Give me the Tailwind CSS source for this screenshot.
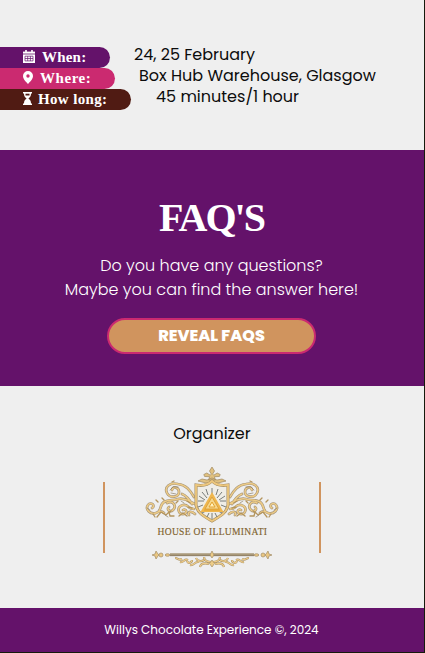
<!DOCTYPE html>
<html lang="en">
<head>
<meta charset="utf-8">
<title>Willys Chocolate Experience</title>
<script src="https://cdn.jsdelivr.net/npm/@tailwindcss/browser@4"></script>
</head>
<body class="flex h-[653px] w-[425px] flex-col overflow-hidden border-r border-b border-[#151a0c] bg-[#efefef] font-[Poppins,Inter,sans-serif] text-[#0c0c0c]">
<section class="h-[150px] shrink-0 pt-[47px] text-base leading-[21px] whitespace-nowrap">
  <div class="flex h-[21px]">
    <div class="flex w-[110px] items-center rounded-r-full bg-[#64126a] pl-[23px] text-white">
      <svg class="mb-[3px] h-[13px] w-[12px]" viewBox="0 0 12 13" fill="none"><path d="M0 1.600h12V13H0z" fill="#fff"/><path d="M2.200 0h1.600v3H2.200zM8.200 0h1.600v3H8.200z" fill="#fff"/><path d="M0 4h12" stroke="#64126a" stroke-width=".8"/><path d="M2 6.200h8v4.700H2zM2 8.500h8M4.700 6.200v4.700M7.400 6.200v4.700" stroke="#64126a" stroke-width=".7"/></svg>
      <span class="ml-[7px] font-['Liberation_Serif',serif] text-[15px] font-bold tracking-[0.2px]">When:</span>
    </div>
    <span class="ml-[24px] -mt-[3px]">24, 25 February</span>
  </div>
  <div class="flex h-[21px]">
    <div class="flex w-[115px] items-center rounded-r-full bg-[#cb2a70] pl-[23px] text-white">
      <svg class="mb-[2px] h-[13px] w-[10px]" viewBox="0 0 10 13"><path fill="#fff" fill-rule="evenodd" d="M5 0a5 5 0 0 1 5 5c0 3.200-3.200 6-5 8-1.800-2-5-4.800-5-8a5 5 0 0 1 5-5zm0 3.300a1.700 1.700 0 1 0 0 3.400 1.700 1.700 0 0 0 0-3.400z"/></svg>
      <span class="ml-[7px] font-['Liberation_Serif',serif] text-[15px] font-bold tracking-[0.55px]">Where:</span>
    </div>
    <span class="ml-[24px] -mt-[3px]">Box Hub Warehouse, Glasgow</span>
  </div>
  <div class="flex h-[21px]">
    <div class="flex w-[131px] items-center rounded-r-full bg-[#501b13] pl-[23px] text-white">
      <svg class="mb-[3px] h-[13px] w-[9px]" viewBox="0 0 9 13"><path fill="#fff" d="M0 0h9v1.500H8c0 2.500-.8 3.700-2.600 5C7.200 7.800 8 9 8 11.500h1V13H0v-1.500h1C1 9 1.800 7.800 3.600 6.500 1.800 5.200 1 4 1 1.500H0z"/><path d="M2.500 1.700h4v1.800h-4z" fill="#501b13"/></svg>
      <span class="ml-[6px] font-['Liberation_Serif',serif] text-[15px] font-bold tracking-[0.35px]">How long:</span>
    </div>
    <span class="ml-[25px] -mt-[3px]">45 minutes/1 hour</span>
  </div>
</section>
<section class="flex h-[236px] shrink-0 flex-col items-center bg-[#64126a] pr-px text-white">
  <h2 class="mt-[46px] h-[44px] font-['Liberation_Serif',serif] text-[40px] leading-[44px] font-bold tracking-[-2px]">FAQ'S</h2>
  <p class="mt-[14px] text-center text-base leading-6 font-light whitespace-nowrap">Do you have any questions?<br>Maybe you can find the answer here!</p>
  <button class="mt-[16px] h-[36px] w-[209px] rounded-full border-2 border-[#cb2a70] bg-[#d0945e] text-base leading-[32px] font-extrabold">REVEAL FAQS</button>
</section>
<main class="flex h-[222px] shrink-0 flex-col items-center">
  <p class="mt-[36px] text-base leading-6">Organizer</p>
  <div class="mt-[19px] flex h-[105px] w-[218px] items-center justify-between">
    <div class="mb-px h-[71px] w-[2px] bg-[#d0945e]"></div>
    <svg class="h-[105px] w-[134px]" viewBox="145 465 134 105" fill="none">
      <defs>
        <path id="vine" d="M194 497C190 490 186 485 178 484C170 482 164 487 167 493C170 499 179 497 179 492C179 487 173 486 172 490M195 504C189 502 186 497 178 499C173 501 169 499 164 502C159 505 162 512 156 513C150 515 145 509 148 505C151 501 156 506 152 508M167 503C173 500 177 506 173 510C170 513 166 509 169 507M194 509C187 509 189 504 183 505C176 507 178 515 184 514C188 513 186 508 183 510M182 494C187 496 189 499 192 504M156 513C159 511 162 511 164 513M189 515C187 511 192 511 195 514"/>
        <g id="wing" stroke-linecap="round">
          <use href="#vine" stroke="#a6957a" stroke-width="2.700"/>
          <use href="#vine" stroke="#edcb86" stroke-width="1.500"/>
          <path d="M157 517l4-5 5 3 3-3 1 4 4 0M179 516l4-3 4 3M164 500l-2-2M174 481l-2 1M158 502l-2-2M176 503l2-2M187 501l3 2M169 513l2-2M188 507l4 1M153 514l2 3" stroke="#b4955d" stroke-width="1.300"/>
          <path d="M170 490l3-3 5 0M171 493l5 1M147 508l3 2M181 501l3 2M165 515l3 2" stroke="#8d8068" stroke-width=".7"/>
        </g>
        <path id="leaf" d="M175 558c3 0 4 3 7 1M180 562c4 1 4-4 8-2M187 561c1 3 5 2 5-1M190 565c4 1 5-4 9-3M196 558c1 3 5 4 8 2M200 567c1-4 5-4 9-3M204 557c0 3 3 5 8 5"/>
        <g id="base">
          <path d="M212 553.200h-42v2.800h42z" fill="#a9997a"/>
          <path d="M170 555.700h42" stroke="#85765c" stroke-width=".7"/>
          <g fill="#e9c681" stroke="#a38e68" stroke-width=".7"><path d="M152 555l3-1 1-3 2 3 1 1-1 1-2 3-1-3z"/><ellipse cx="161" cy="555" rx="2" ry="2"/><ellipse cx="167.500" cy="555" rx="2.300" ry="1.300"/></g>
          <use href="#leaf" stroke="#a89166" stroke-width="2.200"/>
          <use href="#leaf" stroke="#edcc8a" stroke-width="1.200"/>
        </g>
      </defs>
      <use href="#wing"/><use href="#wing" transform="matrix(-1 0 0 1 424 0)"/>
      <path d="M212 467l2.500 4-1.800 3 1 1.200 3.500-2.200 3 1.500-.8 2-5 .2 1 3.300h-6.800l1-3.300-5-.2-.8-2 3-1.500 3.500 2.200 1-1.200-1.800-3zM198 481l4-2 5 1 5-2 5 2 5-1 4 2-8 2h-12z" fill="#e1c17f" stroke="#9d8861" stroke-width=".7"/>
      <path d="M212 481c-4 4-10 5-16 4v20c1 8 9 12 16 16 7-4 15-8 16-16v-20c-6 1-12 0-16-4z" fill="#efede6" stroke="#a38c62" stroke-width="3"/>
      <path d="M212 481c-4 4-10 5-16 4v20c1 8 9 12 16 16 7-4 15-8 16-16v-20c-6 1-12 0-16-4z" stroke="#edc77d" stroke-width="1.800"/>
      <path d="M212 488v9M206 489l2 6M218 489l-2 6M202 492l5 6M222 492l-5 6M199 496l6 4M225 496l-6 4M198 501h6M226 501h-6M198 507l5-2M226 507l-5-2M202 513l4-2M222 513l-4-2M207 517l2-4M217 517l-2-4M212 519v-6" stroke="#6b706d" stroke-width=".9"/>
      <path d="M212 492L200.500 512h23z" fill="#efb74e"/>
      <path d="M212 497l-7 12h14z" fill="#f6d78c" stroke="#d79932" stroke-width=".8"/>
      <path d="M212 502l-3 5h6zM204 510h16" stroke="#e4a230" fill="#fff2bd"/>
      <text x="157.500" y="534.700" textLength="109.500" font-family="Liberation Serif, serif" font-size="9.500" fill="#80632e" stroke="#80632e" stroke-width=".15">HOUSE OF ILLUMINATI</text>
      <use href="#base"/><use href="#base" transform="matrix(-1 0 0 1 424 0)"/>
      <path d="M212 551l2 4-2 3-2-3zM212 560l2.500 3.500-2.500 3.500-2.500-3.500z" fill="#edcc87" stroke="#a38e68" stroke-width=".7"/>
    </svg>
    <div class="mb-px h-[71px] w-[2px] bg-[#d0945e]"></div>
  </div>
</main>
<footer class="h-[44px] shrink-0 bg-[#64126a] pr-px text-center text-xs leading-[44px] text-white">Willys Chocolate Experience ©, 2024</footer>
</body>
</html>
